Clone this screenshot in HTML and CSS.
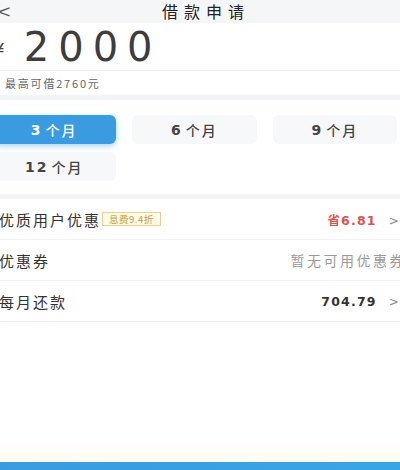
FILE: index.html
```html
<!DOCTYPE html>
<html lang="zh">
  <head>
    <meta charset="UTF-8" />
    <meta name="viewport" content="width=device-width, initial-scale=1.0" />
    <title>借款申请</title>
    <link rel="stylesheet" href="styles.css">
  </head>

  <body>
    <div class="page">
      <div class="header">
        <span class="back">&lt;</span>
        <span class="title">借款申请</span>
      </div>

      <div class="amount">
        <span class="yen">¥</span>
        <span class="num">2000</span>
      </div>
      <div class="hint">最高可借2760元</div>

      <div class="gap"></div>

      <div class="terms">
        <div class="term active">3<span class="unit">个月</span></div>
        <div class="term">6<span class="unit">个月</span></div>
        <div class="term">9<span class="unit">个月</span></div>
        <div class="term">12<span class="unit">个月</span></div>
      </div>

      <div class="gap"></div>

      <div class="list">
        <div class="row">
          <div class="label">优质用户优惠<span class="tag">息费9.4折</span></div>
          <div class="value red">省6.81<span class="arrow">&gt;</span></div>
        </div>
        <div class="row">
          <div class="label">优惠券</div>
          <div class="value muted">暂无可用优惠券</div>
        </div>
        <div class="row">
          <div class="label">每月还款</div>
          <div class="value">704.79<span class="arrow">&gt;</span></div>
        </div>
      </div>

      <div class="fill"></div>
      <div class="bottom"></div>
    </div>
  </body>
</html>
```

FILE: styles.css
```css
body {
  margin: 0;
  background-color: #fff;
  color: #333;
  font-family: "DejaVu Sans", "Noto Sans CJK SC", sans-serif;
  overflow: hidden;
}

.page {
  margin-left: -8px;
  width: 408px;
  height: 470px;
  display: flex;
  flex-direction: column;
}

.header {
  height: 23px;
  background-color: #f5f6f8;
  display: flex;
  align-items: flex-start;
  justify-content: center;
  position: relative;
}

.back {
  position: absolute;
  left: 7px;
  top: 2px;
  font-size: 18px;
  line-height: 21px;
  color: #555;
  font-family: "Liberation Sans", sans-serif;
  transform: scaleX(1.2);
}

.title {
  font-family: "Noto Sans CJK SC", sans-serif;
  font-size: 16px;
  letter-spacing: 6px;
  color: #222;
  margin-left: 20px;
  line-height: 22px;
}

.amount {
  height: 47px;
  display: flex;
  align-items: center;
  border-bottom: 1px solid #f1f2f4;
}

.yen {
  font-size: 20px;
  color: #444;
  margin-top: 6px;
}

.num {
  font-family: "DejaVu Sans", sans-serif;
  font-size: 40px;
  letter-spacing: 9px;
  color: #3d3d40;
  margin-left: 19px;
}

.hint {
  height: 24px;
  padding-left: 13px;
  display: flex;
  align-items: center;
  font-family: "Noto Sans CJK SC", sans-serif;
  font-size: 11px;
  letter-spacing: 1.8px;
  color: #666;
}

.gap {
  height: 5px;
  background-color: #f3f4f6;
}

.terms {
  display: grid;
  grid-template-columns: repeat(3, 1fr);
  gap: 8px 16px;
  padding: 15px 3px 13px 0;
}

.term {
  height: 29px;
  border-radius: 6px;
  background-color: #f7f8fa;
  display: flex;
  align-items: center;
  justify-content: center;
  font-size: 14px;
  font-weight: bold;
  color: #444;
  letter-spacing: 2px;
}

.term .unit {
  font-family: "Noto Sans CJK SC", sans-serif;
  font-size: 14px;
  font-weight: 500;
  letter-spacing: 2px;
  margin-left: 3px;
}

.term.active {
  background-color: #3a9be0;
  color: #fff;
  box-shadow: 0 2px 6px rgba(58, 155, 224, 0.45);
}

.row {
  height: 40px;
  display: flex;
  align-items: center;
  justify-content: space-between;
  border-bottom: 1px solid #f1f2f4;
  padding: 0 0 0 7px;
}

.label {
  font-family: "Noto Sans CJK SC", sans-serif;
  font-size: 15px;
  letter-spacing: 2px;
  color: #333;
  display: flex;
  align-items: center;
}

.tag {
  font-size: 9.5px;
  letter-spacing: 0.5px;
  color: #c89a3a;
  background-color: #fffaea;
  border: 1px solid #ecd08c;
  padding: 0 6px;
  line-height: 12px;
  margin-left: 1px;
}

.value {
  font-size: 12.5px;
  font-weight: bold;
  letter-spacing: 1.2px;
  color: #333;
}

.value.red {
  color: #d9544f;
}

.value.muted {
  font-family: "Noto Sans CJK SC", sans-serif;
  font-weight: normal;
  font-size: 14px;
  letter-spacing: 2.5px;
  color: #9a9a9a;
  margin-right: -6px;
}

.arrow {
  font-weight: normal;
  color: #888;
  font-size: 12px;
  margin-left: 12px;
}

.fill {
  flex: 1;
  background: linear-gradient(to bottom, #fff 85%, #fffcef);
}

.bottom {
  height: 8px;
  background: linear-gradient(to right, #3a9be0, #38a6e6);
}
```
